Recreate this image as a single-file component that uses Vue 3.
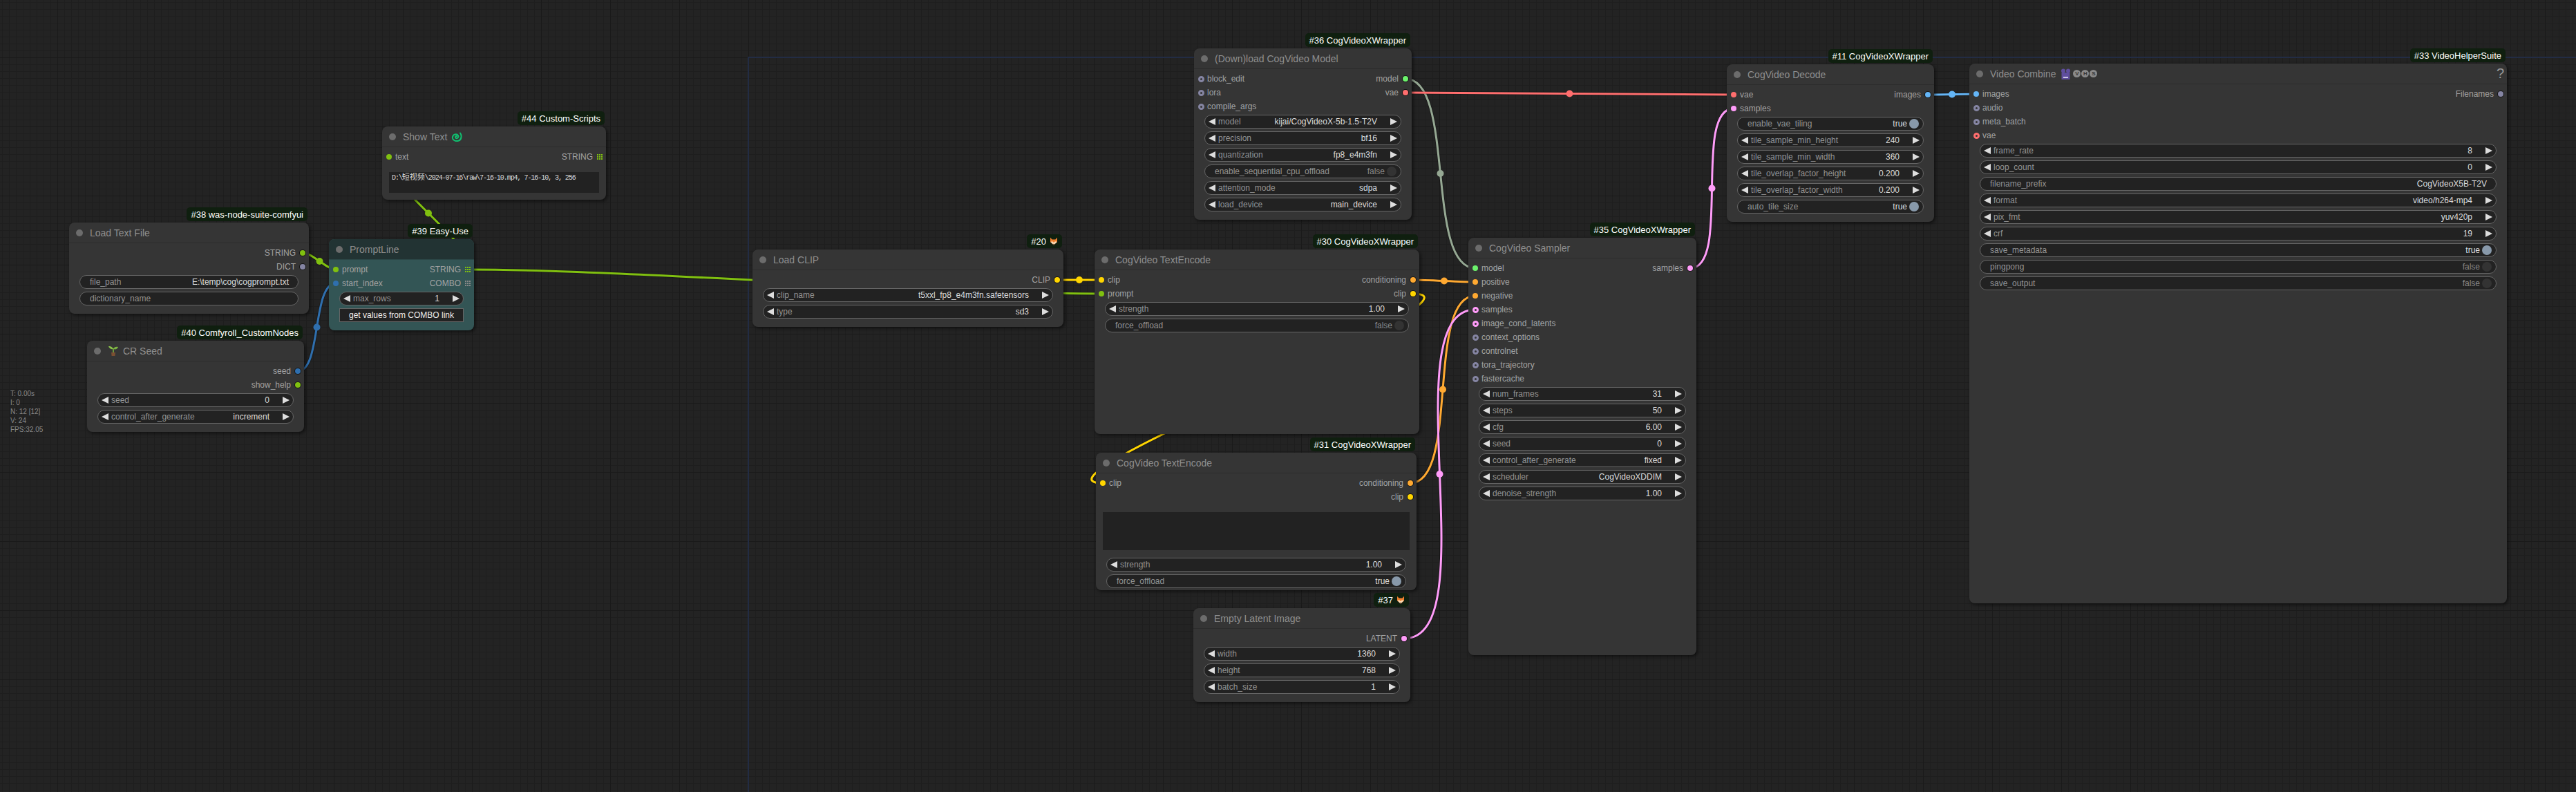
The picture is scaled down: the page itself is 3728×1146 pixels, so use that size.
<script setup>
const GREEN = '#80c010'
const BLUE = '#2f6fae'
const GREY = '#8585a3'
const MODEL = '#6cf26c'
const RED = '#ff6e6e'
const PINK = '#ff9cf9'
const YELLOW = '#ffd500'
const ORANGE = '#ffa931'
const SKY = '#64b5f6'

const num = (label, value) => ({ kind: 'arrows', label, value })
const txt = (label, value = '') => ({ kind: 'text', label, value })
const flag = (label, on) => ({ kind: 'toggle', label, on })
const slot = (name, color, extra = {}) => ({ name, color, ...extra })
const ring = (name, color = GREY) => slot(name, color, { ring: true })
const list = (name, color) => slot(name, color, { list: true })

const nodes = [
  {
    id: 38, badge: 'was-node-suite-comfyui', title: 'Load Text File', x: 100, y: 322, w: 347, h: 132,
    outputs: [slot('STRING', GREEN), slot('DICT', GREY)],
    widgets: [txt('file_path', 'E:\\temp\\cog\\cogprompt.txt'), txt('dictionary_name')],
  },
  {
    id: 39, badge: 'Easy-Use', title: 'PromptLine', x: 476, y: 346, w: 210, h: 132, teal: true,
    inputs: [slot('prompt', GREEN), slot('start_index', BLUE)],
    outputs: [list('STRING', GREEN), list('COMBO', '#888')],
    widgets: [num('max_rows', '1'), { kind: 'button', label: 'get values from COMBO link' }],
  },
  {
    id: 40, badge: 'Comfyroll_CustomNodes', title: 'CR Seed', x: 126, y: 493, w: 314, h: 132, icon: 'sprout',
    outputs: [slot('seed', BLUE), slot('show_help', GREEN)],
    widgets: [num('seed', '0'), num('control_after_generate', 'increment')],
  },
  {
    id: 44, badge: 'Custom-Scripts', title: 'Show Text', x: 553, y: 183, w: 324, h: 106, icon: 'snake',
    inputs: [slot('text', GREEN)],
    outputs: [list('STRING', GREEN)],
    widgets: [{ kind: 'area', height: 30, before: 'D:\\', cjk: '短视频', after: '\\2024-07-16\\raw\\7-16-10.mp4, 7-16-10, 3, 256' }],
  },
  {
    id: 20, badge: '', fox: true, title: 'Load CLIP', x: 1089, y: 361, w: 450, h: 112,
    outputs: [slot('CLIP', YELLOW)],
    widgets: [num('clip_name', 't5xxl_fp8_e4m3fn.safetensors'), num('type', 'sd3')],
  },
  {
    id: 30, badge: 'CogVideoXWrapper', title: 'CogVideo TextEncode', x: 1584, y: 361, w: 470, h: 267,
    inputs: [slot('clip', YELLOW), slot('prompt', GREEN)],
    outputs: [slot('conditioning', ORANGE), slot('clip', YELLOW)],
    widgets: [num('strength', '1.00'), flag('force_offload', false)],
  },
  {
    id: 31, badge: 'CogVideoXWrapper', title: 'CogVideo TextEncode', x: 1586, y: 655, w: 464, h: 199,
    inputs: [slot('clip', YELLOW)],
    outputs: [slot('conditioning', ORANGE), slot('clip', YELLOW)],
    widgets: [{ kind: 'area', height: 55 }, num('strength', '1.00'), flag('force_offload', true)],
  },
  {
    id: 37, badge: '', fox: true, title: 'Empty Latent Image', x: 1727, y: 880, w: 314, h: 136,
    outputs: [slot('LATENT', PINK)],
    widgets: [num('width', '1360'), num('height', '768'), num('batch_size', '1')],
  },
  {
    id: 36, badge: 'CogVideoXWrapper', title: '(Down)load CogVideo Model', x: 1728, y: 70, w: 315, h: 248,
    inputs: [ring('block_edit'), ring('lora'), ring('compile_args')],
    outputs: [slot('model', MODEL), slot('vae', RED)],
    widgets: [
      num('model', 'kijai/CogVideoX-5b-1.5-T2V'), num('precision', 'bf16'), num('quantization', 'fp8_e4m3fn'),
      flag('enable_sequential_cpu_offload', false), num('attention_mode', 'sdpa'), num('load_device', 'main_device'),
    ],
  },
  {
    id: 35, badge: 'CogVideoXWrapper', title: 'CogVideo Sampler', x: 2125, y: 344, w: 330, h: 604,
    inputs: [
      slot('model', MODEL), slot('positive', ORANGE), slot('negative', ORANGE), ring('samples', PINK),
      ring('image_cond_latents', PINK), ring('context_options'), ring('controlnet'), ring('tora_trajectory'), ring('fastercache'),
    ],
    outputs: [slot('samples', PINK)],
    widgets: [
      num('num_frames', '31'), num('steps', '50'), num('cfg', '6.00'), num('seed', '0'),
      num('control_after_generate', 'fixed'), num('scheduler', 'CogVideoXDDIM'), num('denoise_strength', '1.00'),
    ],
  },
  {
    id: 11, badge: 'CogVideoXWrapper', title: 'CogVideo Decode', x: 2499, y: 93, w: 300, h: 228,
    inputs: [slot('vae', RED), slot('samples', PINK)],
    outputs: [slot('images', SKY)],
    widgets: [
      flag('enable_vae_tiling', true), num('tile_sample_min_height', '240'), num('tile_sample_min_width', '360'),
      num('tile_overlap_factor_height', '0.200'), num('tile_overlap_factor_width', '0.200'), flag('auto_tile_size', true),
    ],
  },
  {
    id: 33, badge: 'VideoHelperSuite', title: 'Video Combine', x: 2850, y: 92, w: 778, h: 781, icon: 'vhs', help: true,
    inputs: [slot('images', SKY), ring('audio'), ring('meta_batch'), ring('vae', RED)],
    outputs: [slot('Filenames', GREY)],
    widgets: [
      num('frame_rate', '8'), num('loop_count', '0'), txt('filename_prefix', 'CogVideoX5B-T2V'), num('format', 'video/h264-mp4'),
      num('pix_fmt', 'yuv420p'), num('crf', '19'), flag('save_metadata', true), flag('pingpong', false), flag('save_output', false),
    ],
  },
]

// output -> input, same spline litegraph uses
const wires = [
  [439, 366, 486, 390, GREEN],
  [431, 537, 486, 410, BLUE],
  [677, 390, 563, 227, GREEN],
  [677, 390, 1594, 425, GREEN],
  [1530, 405, 1594, 405, YELLOW],
  [2045, 425, 1596, 699, YELLOW],
  [2045, 405, 2135, 408, ORANGE],
  [2041, 699, 2135, 428, ORANGE],
  [2032, 924, 2135, 448, PINK],
  [2446, 388, 2509, 157, PINK],
  [2034, 114, 2135, 388, '#95a893'],
  [2034, 134, 2509, 137, RED],
  [2790, 137, 2860, 136, SKY],
].map(([x1, y1, x2, y2, color]) => {
  const d = Math.hypot(x2 - x1, y2 - y1) * 0.25
  return {
    color,
    path: `M${x1} ${y1} C${x1 + d} ${y1} ${x2 - d} ${y2} ${x2} ${y2}`,
    mx: (x1 + x2) / 2,
    my: (y1 + y2) / 2,
  }
})

const stats = ['T: 0.00s', 'I: 0', 'N: 12 [12]', 'V: 24', 'FPS:32.05']
const box = (n) => ({ left: `${n.x}px`, top: `${n.y}px`, width: `${n.w}px`, height: `${n.h}px` })
</script>

<template>
  <div class="canvas">
    <svg class="wires" width="3728" height="1146">
      <path d="M1083 1146V83H3728" fill="none" stroke="#222c44" stroke-width="2" />
      <g v-for="(w, i) in wires" :key="i">
        <path :d="w.path" fill="none" stroke="rgba(0,0,0,0.2)" stroke-width="5" />
        <path :d="w.path" fill="none" :stroke="w.color" stroke-width="3" />
        <circle :cx="w.mx" :cy="w.my" r="5" :fill="w.color" />
      </g>
    </svg>

    <div v-for="n in nodes" :key="n.id" class="node" :class="{ teal: n.teal }" :style="box(n)">
      <div class="badge">
        <span>#{{ n.id }} {{ n.badge }}</span>
        <svg v-if="n.fox" class="fox" viewBox="0 0 12 12" width="12" height="12">
          <path d="M1 .8L3.6 3.4H8.4L11 .8V7L6 11.6L1 7Z" fill="#f0802f" />
          <path d="M1.2 7L6 11.6L10.8 7L8 6.2L6 8L4 6.2Z" fill="#fbdcb8" />
          <circle cx="6" cy="10.6" r="0.9" fill="#5b3a28" />
        </svg>
      </div>

      <div class="title">
        <i class="dot"></i>
        <svg v-if="n.icon === 'sprout'" class="sprout" viewBox="0 0 16 15" width="16" height="15">
          <path d="M8 11V4" stroke="#7cb342" stroke-width="1.6" />
          <path d="M8 5C6 1 3 1 1 1C2 4 5 6 8 5Z" fill="#8bc34a" />
          <path d="M8 5C9 2 12 1 15 2C14 5 11 6 8 5Z" fill="#7cb342" />
          <path d="M5 10H11L10.4 15H5.6Z" fill="#7b4f32" />
        </svg>
        <span class="name">{{ n.title }}</span>
        <svg v-if="n.icon === 'snake'" class="snake" viewBox="0 0 16 14" width="16" height="14">
          <path d="M13 1.5C15.5 5 15 11 11 12.5C6 14.5 1 11 2 7C3 3 8 2 10 5C11.5 8 8 10 6.5 8.5C5.5 7 6.5 5.5 8 6"
            fill="none" stroke="#10c070" stroke-width="2" stroke-linecap="round" />
        </svg>
        <span v-if="n.icon === 'vhs'" class="vhs">
          <svg viewBox="0 0 15 16" width="15" height="16">
            <circle cx="4" cy="3.5" r="3" fill="#5f4e9e" />
            <circle cx="11" cy="3.5" r="3" fill="#5f4e9e" />
            <rect x="1.5" y="6" width="12" height="10" fill="#5f4e9e" />
            <rect x="4" y="12" width="7" height="2" fill="#c9c4e4" />
          </svg>
          <b>V</b><b>H</b><b>S</b>
        </span>
        <span v-if="n.help" class="help">?</span>
      </div>

      <div class="slots">
        <div class="col">
          <div v-for="s in n.inputs" :key="s.name" class="slot in">
            <i class="pin" :class="{ ring: s.ring }" :style="{ '--pin': s.color }"></i>
            <span>{{ s.name }}</span>
          </div>
        </div>
        <div class="col">
          <div v-for="s in n.outputs" :key="s.name" class="slot out">
            <span>{{ s.name }}</span>
            <svg v-if="s.list" class="grid" viewBox="0 0 8 8" width="8" height="8" :fill="s.color">
              <template v-for="r in 3" :key="r">
                <rect v-for="c in 3" :key="c" :x="(c - 1) * 3" :y="(r - 1) * 3" width="2" height="2" />
              </template>
            </svg>
            <i v-else class="pin outline" :style="{ '--pin': s.color }"></i>
          </div>
        </div>
      </div>

      <div class="widgets">
        <template v-for="w in n.widgets" :key="w.label || w.kind">
          <div v-if="w.kind === 'area'" class="area" :style="{ height: `${w.height}px` }">{{ w.before }}<span class="cjk">{{ w.cjk }}</span>{{ w.after }}</div>
          <div v-else-if="w.kind === 'button'" class="button">{{ w.label }}</div>
          <div v-else class="widget" :class="w.kind">
            <i v-if="w.kind === 'arrows'" class="arrow left"></i>
            <span class="label">{{ w.label }}</span>
            <template v-if="w.kind === 'toggle'">
              <span class="value" :class="{ off: !w.on }">{{ w.on ? 'true' : 'false' }}</span>
              <i class="knob" :class="{ on: w.on }"></i>
            </template>
            <span v-else class="value">{{ w.value }}</span>
            <i v-if="w.kind === 'arrows'" class="arrow right"></i>
          </div>
        </template>
      </div>
    </div>

    <div class="stats">
      <div v-for="s in stats" :key="s">{{ s }}</div>
    </div>
  </div>
</template>

<style scoped>
.canvas {
  position: relative;
  width: 3728px;
  height: 1146px;
  overflow: hidden;
  font-family: "Liberation Sans", Arial, sans-serif;
  font-size: 12px;
  background-color: #232323;
  background-image:
    linear-gradient(90deg, #1a1a1a 1px, transparent 1px),
    linear-gradient(180deg, #1a1a1a 1px, transparent 1px),
    linear-gradient(90deg, #1e1e1e 1px, transparent 1px),
    linear-gradient(180deg, #1e1e1e 1px, transparent 1px);
  background-size: 100px 100px, 100px 100px, 10px 10px, 10px 10px;
  background-position: 83px 83px, 83px 83px, 3px 3px, 3px 3px;
}

.wires {
  position: absolute;
  left: 0;
  top: 0;
}

.node {
  position: absolute;
  box-sizing: border-box;
  display: flex;
  flex-direction: column;
  background: #353535;
  border-radius: 8px;
  box-shadow: 2px 2px 5px rgba(0, 0, 0, 0.55);
}

.node.teal {
  background: #335555;
}

.title {
  position: relative;
  display: flex;
  align-items: center;
  flex: none;
  height: 30px;
  box-sizing: border-box;
  padding-left: 10px;
  border-bottom: 1px solid #2c2c2c;
  border-radius: 8px 8px 0 0;
  color: #8f8f8f;
  font-size: 14px;
}

.teal .title {
  background: #223333;
  border-bottom-color: #2b4646;
}

.dot {
  width: 10px;
  height: 10px;
  margin-right: 10px;
  border-radius: 50%;
  background: #6c6c6c;
}

.sprout {
  margin-right: 6px;
}

.snake {
  margin-left: 6px;
}

.vhs {
  display: flex;
  align-items: center;
  gap: 1px;
  margin-left: 7px;
}

.vhs svg {
  margin-right: 2px;
}

.vhs b {
  width: 11px;
  height: 11px;
  border-radius: 50%;
  background: #8a8a8a;
  color: #353535;
  font-size: 8px;
  line-height: 11px;
  text-align: center;
}

.help {
  position: absolute;
  right: 4px;
  top: 3px;
  font-size: 20px;
  color: #999;
}

.badge {
  position: absolute;
  right: 2px;
  bottom: calc(100% + 2px);
  display: flex;
  align-items: center;
  gap: 5px;
  height: 20px;
  padding: 0 6px;
  border-radius: 5px;
  background: #0f1f0f;
  color: #fff;
  font-size: 13px;
  white-space: nowrap;
}

.slots {
  display: flex;
  justify-content: space-between;
  flex: none;
  padding-top: 4px;
  color: #a3a3a3;
}

.slot {
  display: flex;
  align-items: center;
  height: 20px;
}

.slot.in {
  gap: 5px;
  padding-left: 6px;
}

.slot.out {
  justify-content: flex-end;
  gap: 6px;
  padding-right: 5px;
}

.pin {
  width: 8px;
  height: 8px;
  flex: none;
  border-radius: 50%;
  background: var(--pin);
}

.pin.outline {
  box-shadow: 0 0 0 1px #151515;
}

.pin.ring {
  box-sizing: border-box;
  width: 9px;
  height: 9px;
  margin: 0 -0.5px;
  border: 3px solid var(--pin);
  background: #353535;
}

.widgets {
  display: flex;
  flex-direction: column;
  gap: 4px;
  margin-top: 2px;
  padding: 0 15px;
}

.widget {
  display: flex;
  align-items: center;
  flex: none;
  box-sizing: border-box;
  height: 20px;
  border: 1px solid #666;
  border-radius: 10px;
  background: #222;
  white-space: nowrap;
}

.label {
  flex: 1;
  color: #939393;
}

.value {
  color: #ddd;
}

.value.off {
  color: #888;
}

.text,
.toggle {
  padding-left: 14px;
}

.text {
  padding-right: 13px;
}

.arrow {
  flex: none;
  width: 0;
  height: 0;
  border-top: 5px solid transparent;
  border-bottom: 5px solid transparent;
}

.arrow.left {
  margin: 0 4px 0 5px;
  border-right: 10px solid #ddd;
}

.arrow.right {
  margin: 0 5px 0 19px;
  border-left: 10px solid #ddd;
}

.knob {
  flex: none;
  width: 14px;
  height: 14px;
  margin: 0 6px 0 3px;
  border-radius: 50%;
  background: #333;
}

.knob.on {
  background: #8899aa;
}

.button {
  flex: none;
  box-sizing: border-box;
  height: 20px;
  border: 1px solid #666;
  background: #222;
  color: #eee;
  line-height: 18px;
  text-align: center;
}

.area {
  flex: none;
  box-sizing: border-box;
  margin: 10px -5px 7px;
  padding: 3px 4px;
  background: #222;
  color: #ddd;
  font-family: "Liberation Mono", "Noto Sans CJK SC", monospace;
  font-size: 10px;
  letter-spacing: -1.05px;
  line-height: 11px;
  white-space: nowrap;
}

.cjk {
  font-size: 11px;
  letter-spacing: 0;
}

.stats {
  position: absolute;
  left: 15px;
  top: 563px;
  color: #888;
  font-size: 10px;
  line-height: 13px;
}
</style>

<style>
body {
  margin: 0;
  background: #232323;
  overflow: hidden;
}
</style>
